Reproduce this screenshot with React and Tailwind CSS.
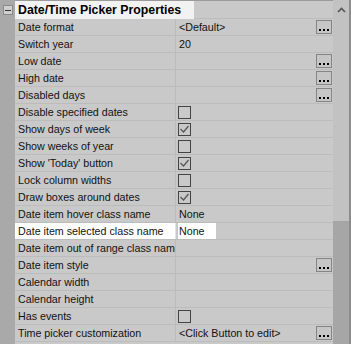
import React from 'react';

const rows = [
  { name: 'Date format', value: '<Default>', button: true },
  { name: 'Switch year', value: '20' },
  { name: 'Low date', button: true },
  { name: 'High date', button: true },
  { name: 'Disabled days', button: true },
  { name: 'Disable specified dates', check: false },
  { name: 'Show days of week', check: true },
  { name: 'Show weeks of year', check: false },
  { name: "Show 'Today' button", check: true },
  { name: 'Lock column widths', check: false },
  { name: 'Draw boxes around dates', check: true },
  { name: 'Date item hover class name', value: 'None' },
  { name: 'Date item selected class name', value: 'None', selected: true },
  { name: 'Date item out of range class name' },
  { name: 'Date item style', button: true },
  { name: 'Calendar width' },
  { name: 'Calendar height' },
  { name: 'Has events', check: false },
  { name: 'Time picker customization', value: '<Click Button to edit>', button: true },
];

function CheckBox({ checked }) {
  return (
    <div className="w-[13px] h-[13px] border border-[#444] flex items-center justify-center">
      {checked && (
        <svg width="11" height="11" viewBox="0 0 11 11">
          <path d="M1.5 5 L4.5 8 L9.5 2" fill="none" stroke="#555" strokeWidth="1.2" />
        </svg>
      )}
    </div>
  );
}

function DotsButton() {
  return (
    <div className="w-[16px] h-[14px] border border-[#858585] bg-[#c6c6c6] flex items-end justify-center gap-[2px] pb-[2px]">
      <span className="w-[2px] h-[2px] bg-black" />
      <span className="w-[2px] h-[2px] bg-black" />
      <span className="w-[2px] h-[2px] bg-black" />
    </div>
  );
}

function Row({ row }) {
  return (
    <div className="flex h-[17px] border-b border-[#bcbcbc]">
      <div className={`w-[161px] shrink-0 pl-[3px] overflow-hidden whitespace-nowrap leading-[16px] border-r ${row.selected ? 'bg-white border-[#e2e2e2]' : 'border-[#bcbcbc]'}`}>
        {row.name}
      </div>
      <div className="flex-1 flex items-center pl-[2px] pr-[1px] overflow-hidden whitespace-nowrap">
        {row.check !== undefined && <CheckBox checked={row.check} />}
        {row.value && (
          <span className={`leading-[16px] ${row.selected ? 'bg-white w-[38px] pl-[1px]' : 'pl-[1px]'}`}>{row.value}</span>
        )}
        {row.button && (
          <div className="ml-auto">
            <DotsButton />
          </div>
        )}
      </div>
    </div>
  );
}

export default function App() {
  return (
    <div
      className="w-[351px] h-[344px] flex bg-[#a9a9a9] text-[#111] text-[10.7px] overflow-hidden"
      style={{ fontFamily: '"Liberation Sans", Arial, sans-serif' }}
    >
      {/* left expander strip */}
      <div className="w-[15px] shrink-0 flex flex-col items-center">
        <div className="mt-[5px] w-[10px] h-[10px] border border-[#8a8a8a] bg-[#d0d0d0] flex items-center justify-center">
          <span className="w-[6px] h-[1px] bg-[#333]" />
        </div>
      </div>

      {/* grid */}
      <div className="w-[318px] shrink-0 flex flex-col bg-[#c9c9c9]">
        <div className="flex h-[19px] border-t border-[#9a9a9a]">
          <div className="w-[179px] bg-[#f2f2f2] pl-[3px] font-bold text-[12.3px] leading-[18px] whitespace-nowrap text-black">
            Date/Time Picker Properties
          </div>
          <div className="flex-1 border-b border-[#bcbcbc]" />
        </div>
        {rows.map((row) => (
          <Row key={row.name} row={row} />
        ))}
      </div>

      {/* scrollbar */}
      <div className="w-[16px] shrink-0 flex flex-col bg-[#c2c2c2]">
        <div className="h-[20px] flex items-center justify-center">
          <svg width="9" height="6" viewBox="0 0 9 6">
            <path d="M1 5 L4.5 1.5 L8 5" fill="none" stroke="#555" strokeWidth="1.6" />
          </svg>
        </div>
        <div className="h-[201px]" />
        <div className="flex-1 bg-[#a6a6a6]" />
      </div>
      <div className="w-[2px] shrink-0 bg-[#8c8c8c]" />
    </div>
  );
}
